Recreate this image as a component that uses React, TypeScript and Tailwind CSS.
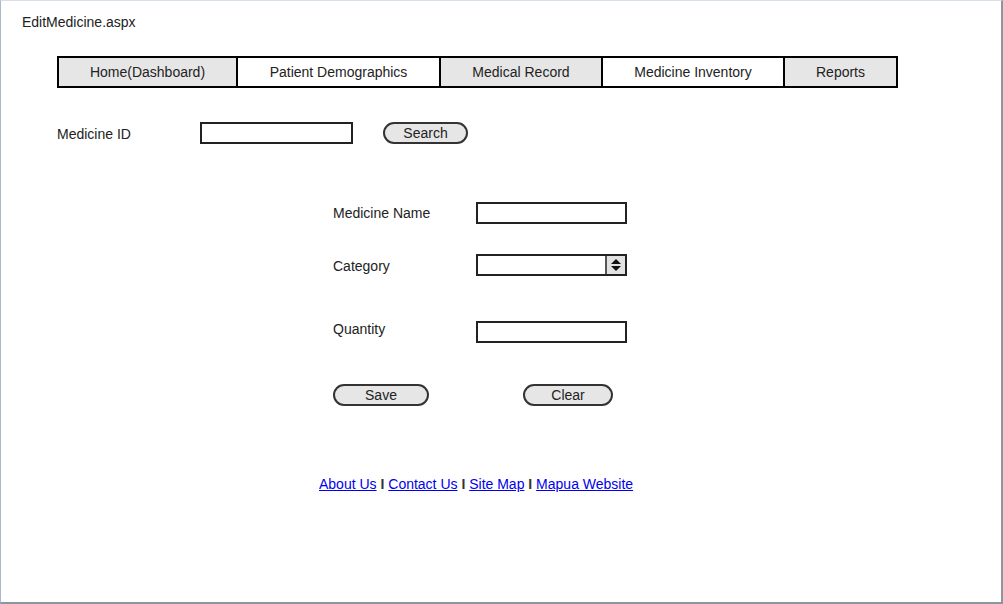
import React from "react";

const font = { fontFamily: '"Liberation Sans", Arial, sans-serif' };

function Field() {
  return <div className="w-[151px] h-[22px] border-2 border-[#222] bg-white" />;
}

function Pill({ label, w }: { label: string; w: string }) {
  return (
    <div className={`${w} h-[22px] rounded-full border-2 border-[#333] bg-[#e6e6e6] flex items-center justify-center text-[14px] leading-none text-[#222]`}>
      {label}
    </div>
  );
}

export default function App() {
  const navItems = [
    { label: "Home(Dashboard)", w: "w-[177px]", gray: true },
    { label: "Patient Demographics", w: "w-[203px]", gray: false },
    { label: "Medical Record", w: "w-[162px]", gray: true },
    { label: "Medicine Inventory", w: "w-[182px]", gray: false },
    { label: "Reports", w: "w-[113px]", gray: true },
  ];
  return (
    <div style={font} className="w-[1003px] h-[604px] bg-white border-t border-t-[#d6dee8] border-l border-l-[#a9b8ca] border-r-2 border-r-[#8e959e] border-b-2 border-b-[#8e959e] text-[#222] overflow-hidden">
      <div className="pl-[21px] pt-[13px] text-[14px] leading-[16px]">EditMedicine.aspx</div>

      <div className="ml-[56px] mt-[26px] flex w-[841px] h-[32px] border-2 border-black">
        {navItems.map((n, i) => (
          <div
            key={n.label}
            className={`${n.w} ${i > 0 ? "border-l-2 border-black" : ""} ${n.gray ? "bg-[#e6e6e6]" : "bg-white"} flex items-center justify-center text-[14px] text-[#222]`}
          >
            {n.label}
          </div>
        ))}
      </div>

      <div className="ml-[56px] mt-[34px] flex items-center h-[22px]">
        <div className="w-[143px] text-[14px] mt-[2px]">Medicine ID</div>
        <div className="w-[153px] h-[22px] border-2 border-[#222] bg-white" />
        <div className="ml-[30px]">
          <Pill label="Search" w="w-[85px]" />
        </div>
      </div>

      <div className="ml-[332px] mt-[58px] flex flex-col">
        <div className="flex items-center h-[22px]">
          <div className="w-[143px] text-[14px]">Medicine Name</div>
          <Field />
        </div>
        <div className="mt-[30px] flex items-center h-[22px]">
          <div className="w-[143px] text-[14px] mt-[2px]">Category</div>
          <div className="w-[151px] h-[22px] border-2 border-[#222] bg-white flex">
            <div className="flex-1" />
            <div className="w-[20px] h-full border-l-2 border-[#555] bg-[#e2e2e2] flex items-center justify-center">
              <svg width="12" height="14" viewBox="0 0 12 14">
                <path d="M6 1 L11 6 L1 6 Z" fill="#111" />
                <path d="M1 8 L11 8 L6 13 Z" fill="#111" />
              </svg>
            </div>
          </div>
        </div>
        <div className="mt-[45px] flex items-center h-[22px]">
          <div className="w-[143px] text-[14px] -mt-[6px]">Quantity</div>
          <Field />
        </div>
        <div className="mt-[41px] flex items-center">
          <Pill label="Save" w="w-[96px]" />
          <div className="ml-[94px]">
            <Pill label="Clear" w="w-[90px]" />
          </div>
        </div>
      </div>

      <div className="ml-[318px] mt-[70px] text-[14px] leading-[16px] whitespace-pre">
        <a href="#" className="text-[#0000ee] underline">About Us</a>
        <span className="font-bold text-[#333]"> I </span>
        <a href="#" className="text-[#0000ee] underline">Contact Us</a>
        <span className="font-bold text-[#333]"> I </span>
        <a href="#" className="text-[#0000ee] underline">Site Map</a>
        <span className="font-bold text-[#333]"> I </span>
        <a href="#" className="text-[#0000ee] underline">Mapua Website</a>
      </div>
    </div>
  );
}
